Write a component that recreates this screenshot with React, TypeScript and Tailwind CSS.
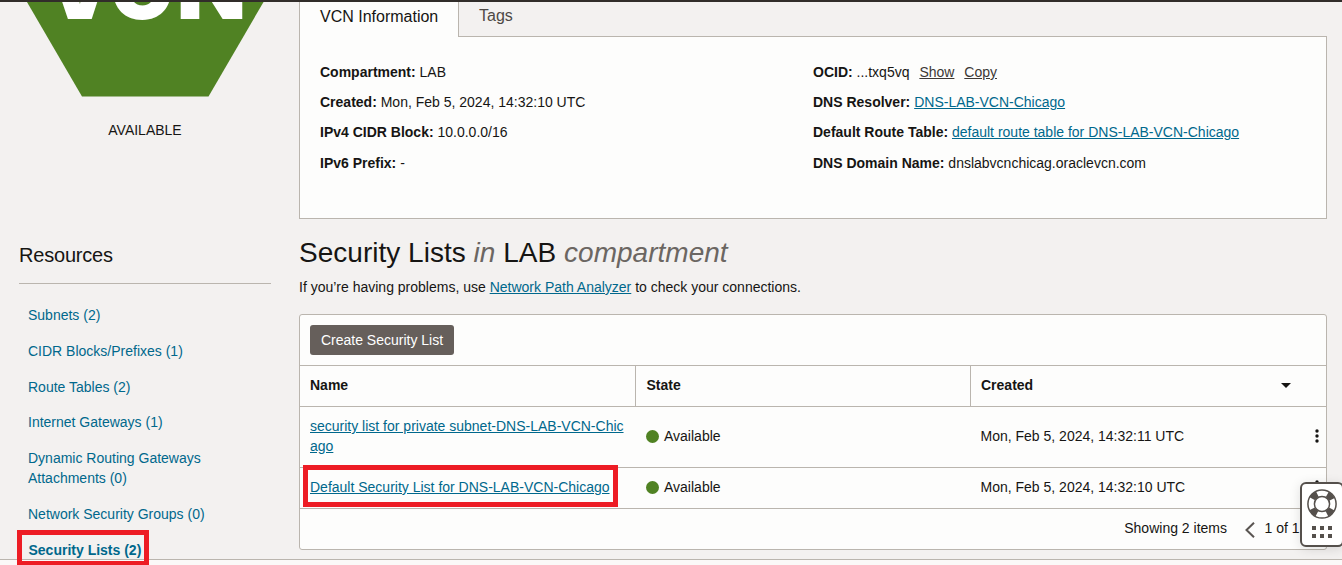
import React from "react";

const LINE = "border-[#bab5ae]";

function Hexagon() {
  return (
    <svg className="block h-[96px] w-[299px]" viewBox="0 2 299 96" fill="none">
      <path d="M25.8 0 L82 96.5 H208.5 L264.7 0 Z" fill="#508223" />
      <g fill="#fff" fontFamily="Inter, sans-serif" fontWeight="900" fontSize="88">
        <text x="44.5" y="19">V</text>
        <text x="110" y="19" fontSize="84">C</text>
        <text x="176.5" y="19" textLength="70" lengthAdjust="spacingAndGlyphs">N</text>
      </g>
    </svg>
  );
}

function Link({ children }: { children: React.ReactNode }) {
  return <a className="text-[#00688c] underline underline-offset-1">{children}</a>;
}

function Field({ label, children }: { label: string; children: React.ReactNode }) {
  return (
    <div className="h-[30.2px] leading-[30px]">
      <b>{label}</b> {children}
    </div>
  );
}

const resources = [
  "Subnets (2)",
  "CIDR Blocks/Prefixes (1)",
  "Route Tables (2)",
  "Internet Gateways (1)",
  "Dynamic Routing Gateways Attachments (0)",
  "Network Security Groups (0)",
];

function Sidebar() {
  return (
    <aside className="w-[299px] shrink-0">
      <Hexagon />
      <div className="mt-[22px] w-[290px] text-center leading-5">AVAILABLE</div>
      <div className="mt-[101px] ml-[19px] w-[252px]">
        <h2 className={`h-[43px] border-b ${LINE} text-xl leading-7 tracking-[-0.2px]`}>Resources</h2>
        <nav className="mt-[21px] ml-[9px] flex w-[200px] flex-col gap-[15.8px] leading-5 text-[#00688c]">
          {resources.map((r) => (
            <a key={r}>{r}</a>
          ))}
          <div className="relative pl-[0.5px]">
            <b>Security Lists (2)</b>
            <div className="absolute -top-[10px] -left-[11px] z-10 h-[36px] w-[132px] border-[5px] border-[#ed1c24]" />
          </div>
        </nav>
      </div>
    </aside>
  );
}

function Info() {
  return (
    <section>
      <div className="flex h-[35px] text-base">
        <div className={`w-[160px] border-x ${LINE} bg-[#fdfdfc] pl-5 leading-[30px]`}>VCN Information</div>
        <div className={`flex-1 border-b ${LINE} pl-5 leading-7 text-[#4d4845]`}>Tags</div>
      </div>
      <div className={`flex h-[182px] border-x border-b ${LINE} bg-[#fdfdfc] pt-5 pl-5`}>
        <div className="w-[493px]">
          <Field label="Compartment:">LAB</Field>
          <Field label="Created:">Mon, Feb 5, 2024, 14:32:10 UTC</Field>
          <Field label="IPv4 CIDR Block:">10.0.0.0/16</Field>
          <Field label="IPv6 Prefix:">-</Field>
        </div>
        <div>
          <Field label="OCID:">
            ...txq5vq <a className="ml-[6px] text-[#3c3835] underline underline-offset-1">Show</a>{" "}
            <a className="ml-[6px] text-[#3c3835] underline underline-offset-1">Copy</a>
          </Field>
          <Field label="DNS Resolver:">
            <Link>DNS-LAB-VCN-Chicago</Link>
          </Field>
          <Field label="Default Route Table:">
            <Link>default route table for DNS-LAB-VCN-Chicago</Link>
          </Field>
          <Field label="DNS Domain Name:">dnslabvcnchicag.oraclevcn.com</Field>
        </div>
      </div>
    </section>
  );
}

const COLS = "grid grid-cols-[336px_335px_1fr]";

function Kebab() {
  return (
    <svg className="mr-[7.5px] h-[14px] w-[4px]" viewBox="0 0 4 14" fill="#161513">
      <circle cx="2" cy="2" r="1.7" />
      <circle cx="2" cy="7" r="1.7" />
      <circle cx="2" cy="12" r="1.7" />
    </svg>
  );
}

function Row({ name, created, tall }: { name: React.ReactNode; created: string; tall?: boolean }) {
  return (
    <div className={`${COLS} ${tall ? "h-[61px]" : "h-[41px]"} items-center border-b ${LINE} pb-[2px]`}>
      <div className="pl-[10px] leading-5">{name}</div>
      <div className="flex items-center gap-[5px] pl-[10px]">
        <span className="size-[13px] rounded-full bg-[#508223]" />
        Available
      </div>
      <div className="flex items-center justify-between pl-[9.5px]">
        {created}
        <Kebab />
      </div>
    </div>
  );
}

function Lists() {
  return (
    <section>
      <h1 className="mt-[14px] h-[40px] text-[28px] leading-[40px] tracking-[0.02px]">
        Security Lists <i className="text-[#6b6662]">in</i> LAB <i className="text-[#6b6662]">compartment</i>
      </h1>
      <p className="mt-[4px] leading-5">
        If you’re having problems, use <Link>Network Path Analyzer</Link> to check your connections.
      </p>
      <div className={`mt-[17px] h-[236px] rounded-[3px] border ${LINE} bg-[#fdfdfc]`}>
        <div className={`flex h-[51px] items-center border-b ${LINE} pl-[10px]`}>
          <button className="h-[30px] w-[144px] rounded-[3px] bg-[#665f5b] text-white">Create Security List</button>
        </div>
        <div className={`${COLS} h-[41px] border-b ${LINE} leading-[39px] font-bold`}>
          <div className={`border-r ${LINE} pl-[10px]`}>Name</div>
          <div className={`border-r ${LINE} pl-[10.5px]`}>State</div>
          <div className="flex h-[39px] items-center justify-between pl-[10px]">
            Created
            <svg className="mr-[35px] h-[5px] w-[10px]" viewBox="0 0 10 5" fill="#161513">
              <path d="M0 0H10L5 5Z" />
            </svg>
          </div>
        </div>
        <Row
          tall
          created="Mon, Feb 5, 2024, 14:32:11 UTC"
          name={
            <Link>
              security list for private subnet-DNS-LAB-VCN-Chic
              <br />
              ago
            </Link>
          }
        />
        <Row
          created="Mon, Feb 5, 2024, 14:32:10 UTC"
          name={
            <div className="relative">
              <Link>Default Security List for DNS-LAB-VCN-Chicago</Link>
              <div className="absolute -top-[12px] -left-[7px] h-[42px] w-[315px] border-[5px] border-[#ed1c24]" />
            </div>
          }
        />
        <div className="flex h-[38px] items-center justify-end pr-[26.5px]">
          Showing 2 items
          <svg className="mt-[4px] mr-[9px] ml-[18.5px] h-[16px] w-[10px]" viewBox="0 0 10 16" fill="none" stroke="#5a5551" strokeWidth="2">
            <path d="M9 .7 1.5 8 9 15.3" />
          </svg>
          1 of 1
        </div>
      </div>
    </section>
  );
}

function HelpWidget() {
  return (
    <div className="absolute top-[482px] left-[1300px] flex h-[65px] w-[44px] flex-col items-center rounded-[6px] border-2 border-[#55504c] bg-white pt-[5px] shadow-[0_2px_12px_rgba(0,0,0,0.12)]">
      <svg className="h-[30px] w-[30px]" viewBox="0 0 30 30" fill="none" stroke="#55504c">
        <circle cx="15" cy="15" r="14.1" strokeWidth="1.5" />
        <circle cx="15" cy="15" r="7.6" strokeWidth="1.5" />
        <circle cx="15" cy="15" r="11" strokeWidth="6.2" strokeDasharray="6.9 10.38" strokeDashoffset="-5.19" />
      </svg>
      <div className="mt-[7px] grid grid-cols-3 gap-1">
        {[0, 1, 2, 3, 4, 5].map((i) => (
          <span key={i} className="size-1 bg-[#55504c]" />
        ))}
      </div>
    </div>
  );
}

export default function App() {
  return (
    <div className="relative h-[565px] w-[1342px] overflow-hidden bg-[#f3f1f0] font-['Liberation_Sans',Arial,sans-serif] text-sm text-[#161513]">
      <div className="h-[2px] bg-[#312d2a]" />
      <div className="flex h-[557px]">
        <Sidebar />
        <main className="w-[1028px]">
          <Info />
          <Lists />
        </main>
      </div>
      <footer className={`h-[6px] border-t ${LINE} bg-[#fbf9f8]`} />
      <HelpWidget />
    </div>
  );
}
